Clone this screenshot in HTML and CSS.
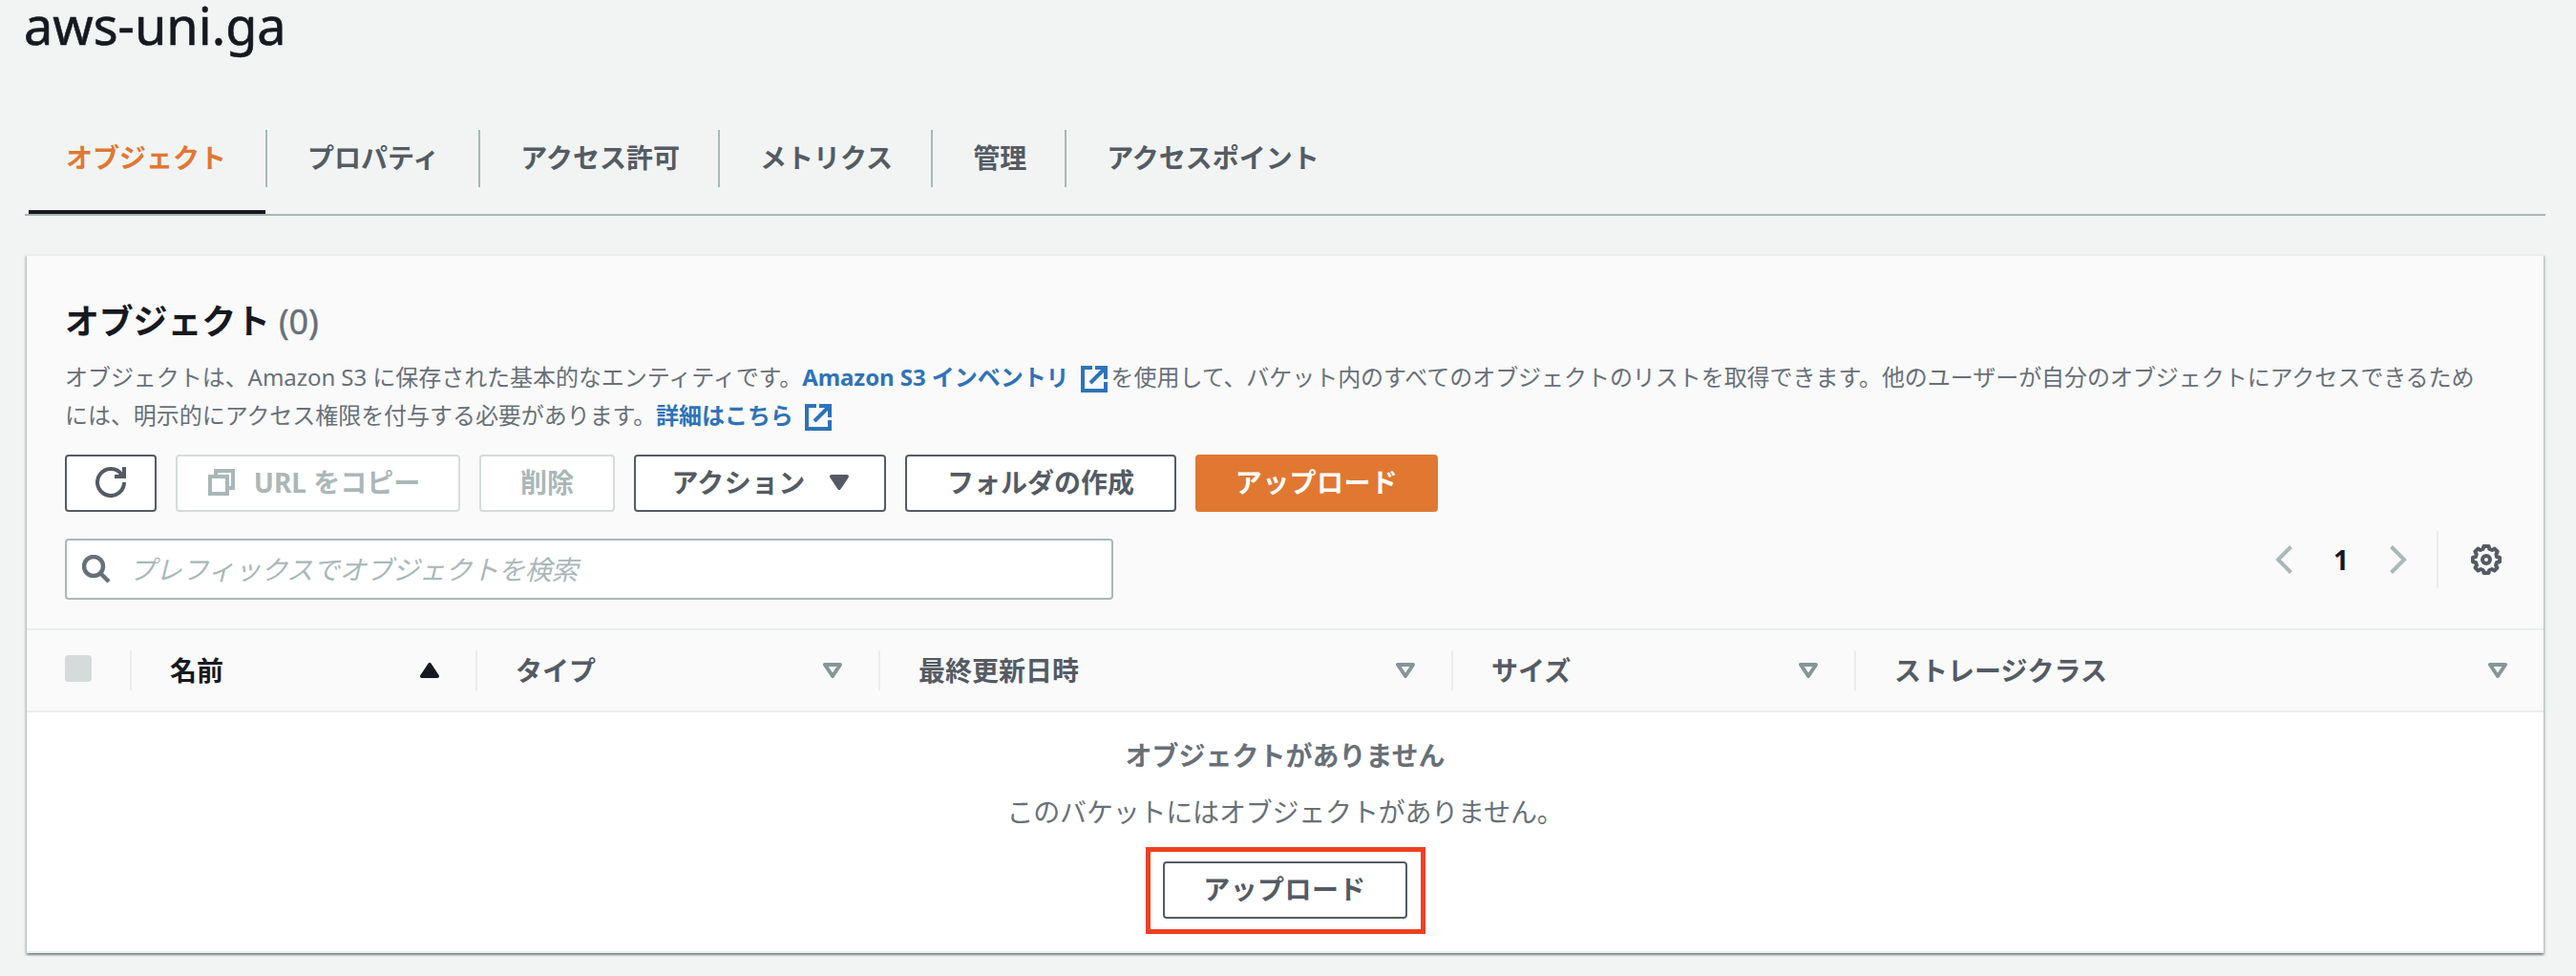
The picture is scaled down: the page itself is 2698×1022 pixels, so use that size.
FILE: index.html
```html
<!DOCTYPE html>
<html lang="ja">
<head>
    <meta charset="UTF-8">
    <meta name="viewport" content="width=device-width, initial-scale=1.0">
    <title>aws-uni.ga</title>
    <link rel="stylesheet" href="styles.css">
</head>
<body>
    <h1>aws-uni.ga</h1>

    <nav class="tabs">
        <a class="tab active">オブジェクト</a>
        <a class="tab tab-properties">プロパティ</a>
        <a class="tab">アクセス許可</a>
        <a class="tab">メトリクス</a>
        <a class="tab">管理</a>
        <a class="tab">アクセスポイント</a>
    </nav>

    <main class="panel">
        <div class="panel-header">
            <h2>オブジェクト <span class="count">(0)</span></h2>
            <p class="description">オブジェクトは、Amazon S3 に保存された基本的なエンティティです。<a class="link">Amazon S3 インベントリ<svg class="external" viewBox="0 0 28 28"><path d="M12 2H2v24h24V17M15 2h11v12M25 3L10 18"/></svg></a>を使用して、バケット内のすべてのオブジェクトのリストを取得できます。他のユーザーが自分のオブジェクトにアクセスできるため<br>には、明示的にアクセス権限を付与する必要があります。<a class="link">詳細はこちら<svg class="external" viewBox="0 0 28 28"><path d="M12 2H2v24h24V17M15 2h11v12M25 3L10 18"/></svg></a></p>

            <div class="actions">
                <button class="btn btn-refresh" aria-label="更新">
                    <svg class="icon" viewBox="0 0 32 32"><path d="M30 16A14 14 0 1 1 27.500 8M30 0v10H20"/></svg>
                </button>
                <button class="btn btn-copy" disabled>
                    <svg class="icon-copy" viewBox="0 0 28 28"><path d="M2 8h18v18H2zM8 8V2h18v18h-6"/></svg>
                    <span>URL をコピー</span>
                </button>
                <button class="btn btn-delete" disabled>削除</button>
                <button class="btn btn-action">
                    <span>アクション</span>
                    <svg class="caret" viewBox="0 0 20 16"><path d="M2 2h16l-8 12z"/></svg>
                </button>
                <button class="btn btn-folder">フォルダの作成</button>
                <button class="btn btn-primary">アップロード</button>
            </div>

            <div class="filter">
                <div class="search">
                    <svg class="icon-search" viewBox="0 0 30 30"><circle cx="12" cy="12" r="10"/><path d="M19 19l9 9"/></svg>
                    <span>プレフィックスでオブジェクトを検索</span>
                </div>
                <div class="pagination">
                    <svg class="arrow" viewBox="0 0 18 30"><path d="M16.500 1.500L3 15l13.500 13.500"/></svg>
                    <span class="page">1</span>
                    <svg class="arrow" viewBox="0 0 18 30"><path d="M1.500 1.500L15 15L1.500 28.500"/></svg>
                    <div class="settings">
                        <svg class="icon icon-gear" viewBox="0 0 32 32"><path d="M13.500 2h5l1 3 2.500 1 2.800-1.400 3 3L26.400 10.400 27 13l3 .7v4.600l-3 .7-1 2.800 1.500 2.700-3 3-2.700-1.500-2.500 1-.8 3h-5l-.8-3-2.500-1-2.700 1.500-3-3L6 21.800 5 19l-3-.7v-4.600l3-.7.8-2.600L4.300 7.600l3-3L10 6l2.500-1z"/><circle cx="16" cy="16" r="4"/></svg>
                    </div>
                </div>
            </div>
        </div>

        <div class="table-header">
            <div class="col"><i class="checkbox"></i></div>
            <div class="col sorted">名前<svg class="caret" viewBox="0 0 20 16"><path d="M2 14h16L10 2z"/></svg></div>
            <div class="col">タイプ<svg class="sort" viewBox="0 0 20 16"><path d="M2 2h16l-8 12z"/></svg></div>
            <div class="col">最終更新日時<svg class="sort" viewBox="0 0 20 16"><path d="M2 2h16l-8 12z"/></svg></div>
            <div class="col">サイズ<svg class="sort" viewBox="0 0 20 16"><path d="M2 2h16l-8 12z"/></svg></div>
            <div class="col">ストレージクラス<svg class="sort" viewBox="0 0 20 16"><path d="M2 2h16l-8 12z"/></svg></div>
        </div>

        <div class="empty">
            <strong>オブジェクトがありません</strong>
            <p>このバケットにはオブジェクトがありません。</p>
            <div class="highlight">
                <button class="btn btn-upload">アップロード</button>
            </div>
        </div>
    </main>
</body>
</html>
```
FILE: styles.css
```css
* {
    box-sizing: border-box;
}

body {
    margin: 0;
    padding: 0 34px 0 28px;
    height: 1022px;
    overflow: hidden;
    background-color: #f2f4f4;
    color: #545b64;
    font-family: "Noto Sans", "Noto Sans CJK JP", sans-serif;
    font-size: 28px;
    line-height: 40px;
    white-space: nowrap;
}

h1 {
    margin: 0 0 0 -3px;
    height: 136px;
    line-height: 52px;
    font-size: 54px;
    font-weight: 400;
    color: #16191f;
    -webkit-text-stroke: 0.6px #16191f;
}

svg {
    fill: none;
    stroke: currentColor;
    stroke-width: 4;
    flex: none;
}

/* Tabs */
.tabs {
    display: flex;
    height: 90px;
    margin: 0 -2px 40px;
    border-bottom: 2px solid #aab7b8;
}

.tab {
    position: relative;
    height: 60px;
    padding: 0 40px 0 42px;
    border-right: 2px solid #aab7b8;
    line-height: 58px;
    font-weight: 700;
}

.tab:last-child {
    border-right: none;
}

.tab-properties {
    padding-right: 41px;
}

.tab.active {
    padding: 0 41px 0 43px;
    color: #e07832;
}

.tab.active::after {
    content: '';
    position: absolute;
    left: 4px;
    right: 0;
    top: 84px;
    height: 4px;
    background-color: #16191f;
}

/* Panel */
.panel {
    height: 732px;
    border-top: 2px solid #eaeded;
    border-bottom: 2px solid #eaeded;
    background-color: #fff;
    box-shadow: 0 2px 2px 0 rgba(0, 28, 36, 0.3), 2px 2px 2px 0 rgba(0, 28, 36, 0.15), -2px 2px 2px 0 rgba(0, 28, 36, 0.15);
}

.panel-header {
    height: 392px;
    padding: 45px 40px 0;
    border-bottom: 2px solid #eaeded;
    background-color: #fafafa;
}

h2 {
    margin: 0;
    font-size: 36px;
    line-height: 48px;
    letter-spacing: -0.2px;
    color: #16191f;
}

.count {
    font-weight: 400;
    color: #687078;
    -webkit-text-stroke: 0.4px #687078;
}

.description {
    margin: 14px 0 21px;
    font-size: 24px;
    line-height: 40px;
    letter-spacing: -0.05px;
    color: #687078;
}

.link {
    font-weight: 700;
    color: #2e73b8;
}

.external {
    width: 28px;
    height: 28px;
    margin: 0 4px 0 12px;
    vertical-align: -7px;
}

/* Buttons */
.actions {
    display: flex;
    gap: 20px;
    height: 60px;
}

.btn {
    display: flex;
    justify-content: center;
    align-items: center;
    height: 60px;
    padding: 0 0 2px;
    border: 2px solid #545b64;
    border-radius: 4px;
    background-color: #fff;
    color: #545b64;
    font: inherit;
    font-weight: 700;
}

.btn:disabled {
    border-color: #d5dbdb;
    color: #aab7b8;
}

.btn-refresh {
    width: 96px;
}

.btn-copy {
    width: 298px;
    gap: 20px;
    padding-right: 8px;
}

.btn-delete {
    width: 142px;
}

.btn-action {
    width: 264px;
    gap: 25px;
    letter-spacing: 0.3px;
}

.btn-folder {
    width: 284px;
}

.btn-primary {
    width: 254px;
    border-color: #e07832;
    background-color: #e07832;
    color: #fff;
    letter-spacing: 0.4px;
}

.btn-upload {
    width: 256px;
    letter-spacing: 0.4px;
}

.icon {
    width: 32px;
    height: 32px;
}

.icon-gear {
    stroke-linejoin: round;
}

.icon-copy {
    width: 28px;
    height: 28px;
}

.caret,
.sort {
    width: 20px;
    height: 16px;
    stroke-linejoin: round;
}

.caret {
    fill: currentColor;
}

.sort {
    color: #879596;
}

/* Search and paging */
.filter {
    display: flex;
    justify-content: space-between;
    align-items: flex-start;
    margin-top: 28px;
}

.search {
    display: flex;
    align-items: center;
    gap: 19px;
    width: 1098px;
    height: 64px;
    padding-left: 16px;
    border: 2px solid #aab7b8;
    border-radius: 4px;
    background-color: #fff;
    color: #aab7b8;
    font-style: italic;
    letter-spacing: -0.25px;
}

.icon-search {
    width: 30px;
    height: 30px;
    color: #687078;
    stroke-width: 4.5;
}

.pagination {
    display: flex;
    align-items: center;
    height: 60px;
    margin-top: -8px;
}

.arrow {
    width: 18px;
    height: 30px;
    color: #aab7b8;
}

.page {
    width: 102px;
    text-align: center;
    font-weight: 700;
    color: #16191f;
}

.settings {
    display: flex;
    align-items: center;
    height: 60px;
    margin-left: 31px;
    padding: 0 4px 0 34px;
    border-left: 2px solid #eaeded;
}

/* Table */
.table-header {
    display: grid;
    grid-template-columns: 110px 362px 422px 600px 422px 1fr;
    align-items: center;
    height: 86px;
    border-bottom: 2px solid #eaeded;
    background-color: #fafafa;
}

.col {
    display: flex;
    justify-content: space-between;
    align-items: center;
    height: 42px;
    padding: 0 38px 0 40px;
    border-right: 2px solid #eaeded;
    font-weight: 700;
}

.col:last-child {
    border-right: none;
}

.sorted {
    color: #16191f;
}

.checkbox {
    flex: none;
    width: 28px;
    height: 28px;
    margin-bottom: 4px;
    border-radius: 4px;
    background-color: #d5dbdb;
}

.empty {
    display: flex;
    flex-direction: column;
    align-items: center;
    padding-top: 25px;
    color: #687078;
}

.empty p {
    margin: 19px 0 17px;
    letter-spacing: -0.2px;
}

.highlight {
    padding: 10px 14px 11px 13px;
    border: 5px solid #ee4023;
}
```
